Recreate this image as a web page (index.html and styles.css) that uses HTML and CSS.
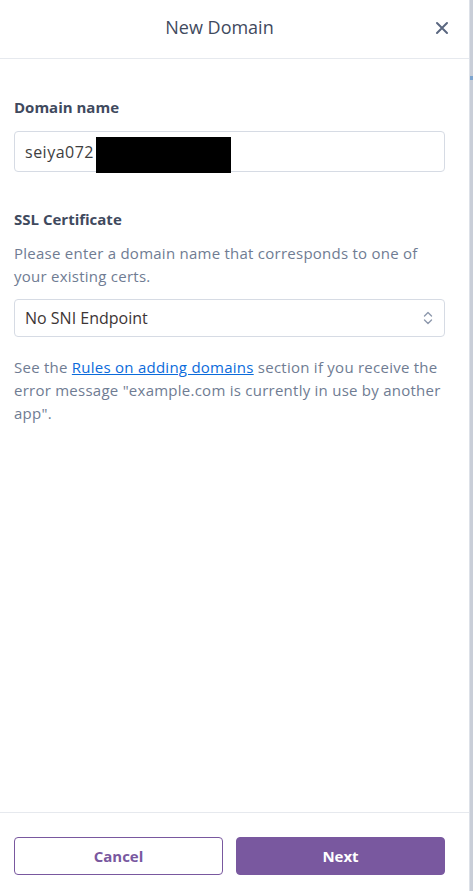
FILE: index.html
```html
<!DOCTYPE html>
<html>
<head>
<meta charset="utf-8">
<link rel="stylesheet" href="styles.css">
</head>
<body>
<div class="page">
  <div class="modal">
    <header class="modal-header">
      <h1 class="modal-title">New Domain</h1>
      <button class="close" aria-label="Close">
        <svg width="14" height="14" viewBox="0 0 14 14"><path d="M2 2 L12 12 M12 2 L2 12" stroke="#5a6780" stroke-width="2" stroke-linecap="round"/></svg>
      </button>
    </header>
    <main class="modal-body">
      <section class="field">
        <label class="label">Domain name</label>
        <div class="input">
          <span class="input-text">seiya072</span>
          <span class="redact"></span>
        </div>
      </section>
      <section class="field field-ssl">
        <label class="label">SSL Certificate</label>
        <p class="help">Please enter a domain name that corresponds to one of your existing certs.</p>
        <div class="select">
          <span class="select-text">No SNI Endpoint</span>
          <svg class="chev" width="10" height="14" viewBox="0 0 10 14"><path d="M1.5 5 L5 1.5 L8.5 5 M1.5 9 L5 12.5 L8.5 9" fill="none" stroke="#8e99ad" stroke-width="1.4" stroke-linecap="round" stroke-linejoin="round"/></svg>
        </div>
      </section>
      <p class="note">See the <a href="#">Rules on adding domains</a> section if you receive the error message "example.com is currently in use by another app".</p>
    </main>
    <footer class="modal-footer">
      <button class="btn btn-outline">Cancel</button>
      <button class="btn btn-primary">Next</button>
    </footer>
  </div>
  <div class="edge"><span class="edge-mark"></span></div>
</div>
</body>
</html>
```
FILE: styles.css
```css
* { box-sizing: border-box; }
html, body { margin: 0; padding: 0; height: 100%; }
body { font-family: "Open Sans", "Noto Sans", sans-serif; background: #fff; }
.page { display: flex; height: 891px; width: 473px; }
.modal { width: 469px; display: flex; flex-direction: column; background: #fff; border-top-right-radius: 4px; }
.edge { width: 4px; background: #c9ced8; position: relative; box-shadow: inset 1px 0 0 #dde1e8; }
.edge-mark { position: absolute; left: 1px; top: 76px; width: 3px; height: 4px; background: #7da4cf; }
.modal-header { height: 59px; border-bottom: 1px solid #e6e9ee; display: flex; align-items: center; justify-content: center; position: relative; padding: 0 30px 4px 0; }
.modal-title { margin: 0; font-size: 18px; line-height: 24px; font-weight: 400; color: #3f4a5e; }
.close { position: absolute; right: 20px; top: 21px; background: none; border: 0; padding: 0; width: 14px; height: 14px; display: flex; }
.modal-body { flex: 1; padding: 38px 24px 0 14px; }
.field { margin-bottom: 37px; }
.field-ssl { margin-bottom: 19px; }
.label { display: block; font-size: 15px; font-weight: 700; color: #3f4a5e; line-height: 20px; margin-bottom: 14px; }
.field-ssl .label { margin-bottom: 13px; }
.input, .select { height: 41px; border: 1px solid #d6dbe4; border-radius: 4px; display: flex; align-items: center; padding: 0 10px; position: relative; width: 431px; }
.input-text { font-size: 16px; letter-spacing: 0.5px; color: #3e3e3e; }
.redact { position: absolute; left: 81px; top: 5px; width: 135px; height: 36px; background: #000; }
.select { height: 38px; justify-content: space-between; padding-right: 11px; }
.select-text { font-size: 16px; color: #3d3535; }
.help { margin: 0 0 11px; font-size: 15px; letter-spacing: 0.25px; line-height: 23px; color: #6f7c93; }
.note { margin: 0; font-size: 15px; letter-spacing: 0.25px; line-height: 23px; color: #6f7c93; }
.note a { color: #0b6bdb; text-decoration: underline; }
.modal-footer { height: 79px; border-top: 1px solid #e6e9ee; display: flex; gap: 13px; padding: 24px 24px 0 14px; }
.btn { width: 209px; height: 38px; border-radius: 4px; font-family: inherit; font-size: 15px; font-weight: 700; }
.btn-outline { background: #fff; color: #79589f; border: 1px solid #79589f; }
.btn-primary { background: #79589f; color: #fff; border: 1px solid #79589f; }
```
